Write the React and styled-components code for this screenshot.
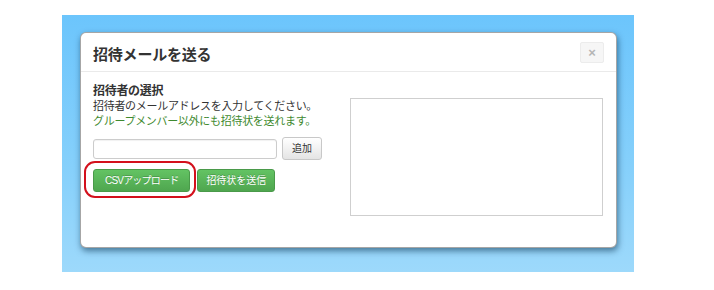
import React from 'react';
import styled, { createGlobalStyle } from 'styled-components';

const GlobalStyle = createGlobalStyle`
  body {
    margin: 0;
    background: #fff;
    font-family: "Noto Sans CJK JP", "Liberation Sans", sans-serif;
    color: #333;
  }
`;

const Page = styled.div`
  width: 714px;
  height: 290px;
  padding: 15px 0 0 62px;
  box-sizing: border-box;
`;

const Backdrop = styled.div`
  width: 572px;
  height: 257px;
  padding: 17px 0 0 18px;
  box-sizing: border-box;
  background: linear-gradient(to bottom, #6cc5fc 0%, #86d0fb 60%, #9dd9fb 100%);
`;

const Modal = styled.div`
  width: 537px;
  height: 216px;
  box-sizing: border-box;
  background: #fff;
  border: 1px solid rgba(0, 0, 0, 0.35);
  border-radius: 6px;
  box-shadow: 1px 3px 6px rgba(0, 40, 70, 0.55);
  display: flex;
  flex-direction: column;
`;

const Header = styled.div`
  height: 39px;
  box-sizing: border-box;
  border-bottom: 1px solid #eaeaea;
  display: flex;
  align-items: center;
  justify-content: space-between;
  padding: 0 12px 0 12px;
`;

const Title = styled.h3`
  margin: 2px 0 0 0;
  font-size: 15px;
  font-weight: bold;
  color: #333;
  letter-spacing: -0.2px;
`;

const CloseButton = styled.button`
  width: 24px;
  height: 21px;
  margin-top: 1px;
  padding: 0;
  border: 1px solid #ececec;
  border-radius: 2px;
  background: #f6f6f6;
  color: #b5b5b5;
  font-family: "Liberation Sans", sans-serif;
  font-size: 13px;
  font-weight: bold;
  line-height: 19px;
`;

const Body = styled.div`
  display: flex;
  padding: 10px 13px 0 12px;
`;

const LeftColumn = styled.div`
  width: 258px;
  display: flex;
  flex-direction: column;
`;

const Label = styled.div`
  font-size: 12px;
  font-weight: bold;
  line-height: 16px;
  letter-spacing: -0.3px;
`;

const Help = styled.div`
  font-size: 11px;
  line-height: 15px;
  letter-spacing: -0.3px;
  color: ${(p) => (p.$success ? '#3f8a2f' : '#333')};
`;

const Row = styled.div`
  display: flex;
  align-items: center;
  gap: ${(p) => p.$gap || 5}px;
  margin-top: ${(p) => p.$top || 0}px;
`;

const TextInput = styled.input`
  width: 184px;
  height: 20px;
  box-sizing: border-box;
  border: 1px solid #ccc;
  border-radius: 3px;
  box-shadow: inset 0 1px 1px rgba(0, 0, 0, 0.06);
  outline: none;
`;

const Button = styled.button`
  display: block;
  height: 23px;
  box-sizing: border-box;
  padding: 0 ${(p) => p.$pad || 8}px;
  border-radius: 3px;
  font-family: "Liberation Sans", "Noto Sans CJK JP", sans-serif;
  font-size: 10px;
  letter-spacing: ${(p) => (p.$tight ? -0.8 : 0)}px;
  line-height: 21px;
  white-space: nowrap;
  ${(p) =>
    p.$success
      ? `
    color: #fff;
    border: 1px solid #4a9a4a;
    background: linear-gradient(to bottom, #63c363, #4fa64f);
    text-shadow: 0 -1px 0 rgba(0, 0, 0, 0.2);
  `
      : `
    color: #333;
    border: 1px solid #c8c8c8;
    background: linear-gradient(to bottom, #ffffff, #e4e4e4);
  `}
`;

const Highlight = styled.div`
  position: relative;
  display: flex;

  &::after {
    content: '';
    position: absolute;
    left: -9px;
    right: -6px;
    top: -8px;
    bottom: -6px;
    border: 2px solid #d3101c;
    border-radius: 11px;
    pointer-events: none;
  }
`;

const Recipients = styled.textarea`
  width: 253px;
  height: 118px;
  box-sizing: border-box;
  margin: 16px 0 0 0;
  border: 1px solid #cfcfcf;
  resize: none;
  outline: none;
`;

export default function App() {
  return (
    <>
      <GlobalStyle />
      <Page>
        <Backdrop>
          <Modal>
            <Header>
              <Title>招待メールを送る</Title>
              <CloseButton>×</CloseButton>
            </Header>
            <Body>
              <LeftColumn>
                <Label>招待者の選択</Label>
                <Help>招待者のメールアドレスを入力してください。</Help>
                <Help $success>グループメンバー以外にも招待状を送れます。</Help>
                <Row $top={9}>
                  <TextInput />
                  <Button $pad={9}>追加</Button>
                </Row>
                <Row $top={9} $gap={7}>
                  <Highlight>
                    <Button $success $tight $pad={11}>CSVアップロード</Button>
                  </Highlight>
                  <Button $success $pad={8}>招待状を送信</Button>
                </Row>
              </LeftColumn>
              <Recipients />
            </Body>
          </Modal>
        </Backdrop>
      </Page>
    </>
  );
}
